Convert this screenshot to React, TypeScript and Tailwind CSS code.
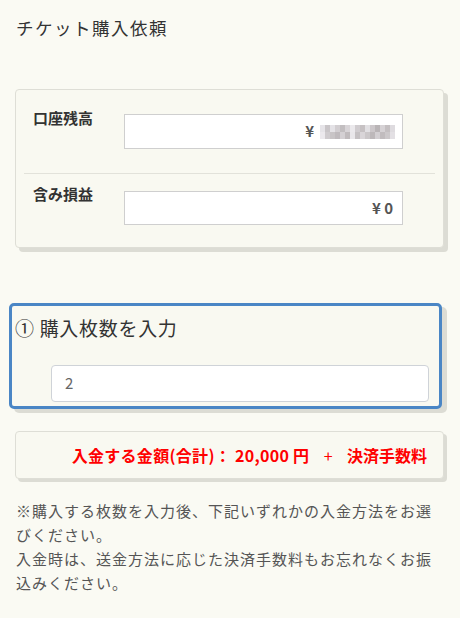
import React from "react"

const FONT = { fontFamily: '"Noto Sans CJK JP", "Noto Sans", sans-serif' }

// pixelated (blurred) account balance
const BLUR = [
  ["#e6e4e8", "#c9c5c8", "#e4e2e6", "#d2ced1", "#c2bec0", "#d8d4d7", "#ebe9ec", "#d0cccf", "#c6c1c3", "#e2e0e3", "#ccc7ca", "#b9b4b6", "#d6d2d5", "#c4bfc1", "#dedbdf"],
  ["#ece9ed", "#cfcbce", "#c8c4c6", "#bfbabd", "#d4d0d3", "#c0bbbd", "#e9e7ea", "#c5c1c3", "#d9d5d8", "#cbc7c9", "#bdb8ba", "#d3cfd2", "#c1bcbe", "#ccc8ca", "#e3e0e4"],
]

function Blurred() {
  return (
    <span className="inline-flex flex-col">
      {BLUR.map((row, i) => (
        <span key={i} className="flex">
          {row.map((c, j) => (
            <span key={j} className="block w-[5px] h-[7px]" style={{ background: c }} />
          ))}
        </span>
      ))}
    </span>
  )
}

export default function App() {
  return (
    <div className="min-h-[618px] bg-[#fafaf3] px-[15px] pt-[16px] pb-8 text-[#333]" style={FONT}>
      <h1 className="pl-[1px] text-[17.5px] leading-[24px] tracking-[1.5px] font-normal text-[#333]">チケット購入依頼</h1>

      <div className="mt-[49px] w-[429px] rounded-[4px] border border-[#deded6] bg-[#f9f9f1] shadow-[4px_4px_0_#dcdcd4]">
        <div className="flex pl-[17px] pt-[18px] pb-[24px]">
          <div className="w-[91px] text-[15px] leading-[20px] font-bold text-[#333]">口座残高</div>
          <div className="mt-[6px] flex h-[35px] w-[279px] items-center justify-end gap-[6px] border border-[#cfcfcf] bg-white pr-[7px] text-[15px] font-bold text-[#555]">
            <span>¥</span>
            <Blurred />
          </div>
        </div>
        <div className="mx-[8px] h-px bg-[#e2e2da]" />
        <div className="flex pl-[17px] pt-[10px] pb-[22px]">
          <div className="w-[91px] text-[15px] leading-[20px] font-bold text-[#333]">含み損益</div>
          <div className="mt-[7px] flex h-[34px] w-[279px] items-center justify-end border border-[#cfcfcf] bg-white pr-[9px] text-[15px] font-bold text-[#555]">
            ¥ 0
          </div>
        </div>
      </div>

      <div className="ml-[-6px] mt-[55px] w-[433px] rounded-[5px] border-[3px] border-[#4a86c5] bg-[#f9f9f1] shadow-[5px_4px_0_#dcdcd4]">
        <div className="pl-[3px] pt-[9px] text-[19px] leading-[26px] tracking-[0.7px] text-[#333]">① 購入枚数を入力</div>
        <div className="mb-[4px] ml-[39px] mr-[10px] mt-[24px] flex h-[37px] items-center rounded-[4px] border border-[#cfd3d8] bg-white pl-[13px] text-[15px] text-[#666]">
          2
        </div>
      </div>

      <div className="mt-[22px] flex h-[48px] w-[429px] items-center justify-end rounded-[4px] border border-[#deded6] bg-[#f9f9f1] pr-[16px] shadow-[3px_3px_0_#dcdcd4]">
        <span className="text-[16px] font-bold text-[#ff0000]">
          <span className="tracking-[0.3px]">入金する金額(合計)： 20,000 円</span>
          <span className="font-normal">&nbsp;&nbsp;&nbsp;&nbsp;+&nbsp;&nbsp;&nbsp;&nbsp;</span>決済手数料
        </span>
      </div>

      <p className="mt-[20px] pl-[1px] text-[15px] leading-[24px] tracking-[1px] text-[#555]">
        ※購入する枚数を入力後、下記いずれかの入金方法をお選びください。
        <br />
        入金時は、送金方法に応じた決済手数料もお忘れなくお振込みください。
      </p>
    </div>
  )
}
